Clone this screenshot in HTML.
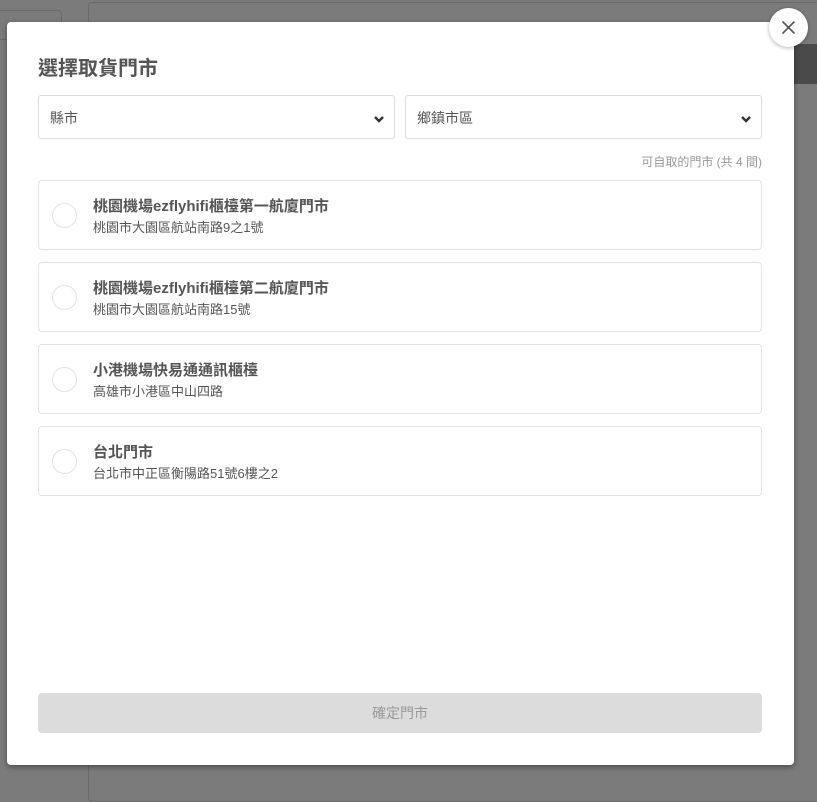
<!DOCTYPE html>
<html><head><meta charset="utf-8"><style>
*{box-sizing:border-box;margin:0;padding:0}
body{width:817px;height:781px;background:#7b7b7b;position:relative;overflow:hidden;font-family:"Liberation Sans","Noto Sans CJK TC",sans-serif;color:#555}
.bg{position:absolute;background:#7b7b7b;border:1px solid #6a6a6a}
.modal{position:absolute;left:7px;top:22px;width:787px;height:743px;background:#fff;border-radius:4px;box-shadow:0 2px 6px rgba(0,0,0,.4)}
h1{position:absolute;left:31px;top:30px;font-size:20px;font-weight:bold;color:#555}
.sel{position:absolute;top:73px;height:44px;border:1px solid #ddd;border-radius:3px;font-size:14px;padding:12px 11px;color:#555}
.sel svg{position:absolute;right:9px;top:19px}
.cnt{position:absolute;right:32px;top:131px;font-size:12px;color:#999}
.card{position:absolute;left:31px;width:724px;height:70px;border:1px solid #e3e3e3;border-radius:4px}
.r{position:absolute;left:13px;top:22px;width:25px;height:25px;border:1px solid #e3e3e3;border-radius:50%}
.t{position:absolute;left:54px;top:14px;font-size:15px;font-weight:bold;color:#555}
.a{position:absolute;left:54px;top:36px;font-size:13px;color:#555}
.btn{position:absolute;left:31px;top:671px;width:724px;height:40px;background:#dcdcdc;border-radius:4px;text-align:center;line-height:40px;font-size:14px;color:#999}
.close{position:absolute;left:769px;top:8px;width:39px;height:39px;border-radius:50%;background:#fff;box-shadow:0 1px 4px rgba(0,0,0,.3)}
</style></head><body>
<div class="bg" style="left:-5px;top:10px;width:67px;height:30px;border-radius:4px"></div>
<div class="bg" style="left:88px;top:2px;width:740px;height:800px;border-radius:4px"></div>
<div style="position:absolute;left:794px;top:44px;width:23px;height:40px;background:#4a4a4a"></div>
<div class="modal">
<h1>選擇取貨門市</h1>
<div class="sel" style="left:31px;width:357px">縣市<svg width="12" height="9" viewBox="0 0 12 9"><path d="M2 2l4 4 4-4" stroke="#333" stroke-width="2.4" fill="none"/></svg></div>
<div class="sel" style="left:398px;width:357px">鄉鎮市區<svg width="12" height="9" viewBox="0 0 12 9"><path d="M2 2l4 4 4-4" stroke="#333" stroke-width="2.4" fill="none"/></svg></div>
<div class="cnt">可自取的門市 (共 4 間)</div>
<div class="card" style="top:158px"><div class="r"></div><div class="t">桃園機場ezflyhifi櫃檯第一航廈門市</div><div class="a">桃園市大園區航站南路9之1號</div></div>
<div class="card" style="top:240px"><div class="r"></div><div class="t">桃園機場ezflyhifi櫃檯第二航廈門市</div><div class="a">桃園市大園區航站南路15號</div></div>
<div class="card" style="top:322px"><div class="r"></div><div class="t">小港機場快易通通訊櫃檯</div><div class="a">高雄市小港區中山四路</div></div>
<div class="card" style="top:404px"><div class="r"></div><div class="t">台北門市</div><div class="a">台北市中正區衡陽路51號6樓之2</div></div>
<div class="btn">確定門市</div>
</div>
<div class="close"><svg width="39" height="39" viewBox="0 0 39 39"><path d="M13.5 13.5l12 12M25.5 13.5l-12 12" stroke="#555" stroke-width="1.6"/></svg></div>
</body></html>
